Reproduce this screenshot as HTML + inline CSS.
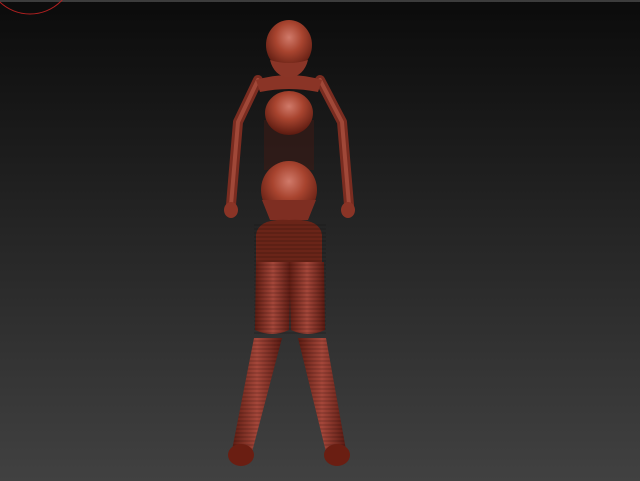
<!DOCTYPE html><html><head><style>html,body{margin:0;padding:0;width:640px;height:481px;overflow:hidden;background:#222}</style></head><body>
<svg width="640" height="481" xmlns="http://www.w3.org/2000/svg">
<defs>
<linearGradient id="bg" x1="0" y1="0" x2="0" y2="1"><stop offset="0" stop-color="#0b0b0b"/><stop offset="1" stop-color="#414141"/></linearGradient>
<radialGradient id="sk" cx="0.5" cy="0.35" r="0.65"><stop offset="0" stop-color="#d07a6a"/><stop offset="0.45" stop-color="#a8442f"/><stop offset="1" stop-color="#5a1a10"/></radialGradient>
<linearGradient id="lim" x1="0" y1="0" x2="1" y2="0"><stop offset="0" stop-color="#5e1c12"/><stop offset="0.5" stop-color="#a5473a"/><stop offset="1" stop-color="#5a1a12"/></linearGradient>
<pattern id="rings" width="4" height="4" patternUnits="userSpaceOnUse"><rect width="4" height="2" fill="#000" opacity="0.12"/></pattern>
</defs>
<rect width="640" height="481" fill="url(#bg)"/>
<rect width="640" height="2" fill="#3c3c3c"/>
<circle cx="30" cy="-30" r="44" fill="none" stroke="#b02020" stroke-width="1"/>
<g stroke-linecap="round" stroke-linejoin="round" fill="none">
<polyline points="258,80 238,122 231,205" stroke="#7a2c20" stroke-width="10"/>
<polyline points="320,80 342,122 349,205" stroke="#7a2c20" stroke-width="10"/>
<polyline points="258,80 238,122 231,205" stroke="#a04838" stroke-width="4"/>
<polyline points="320,80 342,122 349,205" stroke="#a04838" stroke-width="4"/>
</g>
<path d="M254 338 L282 338 L252 452 L232 450Z" fill="url(#lim)"/>
<path d="M298 338 L326 338 L346 450 L326 452Z" fill="url(#lim)"/>
<path d="M254 338 L282 338 L252 452 L232 450Z" fill="url(#rings)"/>
<path d="M298 338 L326 338 L346 450 L326 452Z" fill="url(#rings)"/>
<path d="M256 80 Q289 70 322 80 L318 92 Q289 86 260 92Z" fill="#8a3426"/>
<rect x="264" y="120" width="50" height="50" fill="#3a1a16" opacity="0.6"/>
<ellipse cx="289" cy="45" rx="23" ry="25" fill="url(#sk)"/>
<path d="M270 60 Q289 66 308 60 Q304 76 289 78 Q274 76 270 60Z" fill="#8a3527"/>
<ellipse cx="289" cy="113" rx="24" ry="22" fill="url(#sk)"/>
<ellipse cx="289" cy="190" rx="28" ry="29" fill="url(#sk)"/>
<path d="M262 200 L316 200 L308 220 L270 220Z" fill="#7e2e22"/>
<path d="M256 235 Q258 218 289 220 Q320 218 322 235 L322 262 L256 262Z" fill="#6a2418"/>
<path d="M256 262 L291 262 L289 330 Q272 338 255 330Z" fill="url(#lim)"/>
<path d="M289 262 L324 262 L325 330 Q308 338 291 330Z" fill="url(#lim)"/>
<rect x="254" y="222" width="72" height="112" fill="url(#rings)"/>
<ellipse cx="241" cy="455" rx="13" ry="11" fill="#6a1e12"/>
<ellipse cx="337" cy="455" rx="13" ry="11" fill="#6a1e12"/>
<ellipse cx="231" cy="210" rx="7" ry="8" fill="#8a3426"/>
<ellipse cx="348" cy="210" rx="7" ry="8" fill="#8a3426"/>
</svg>
</body></html>
